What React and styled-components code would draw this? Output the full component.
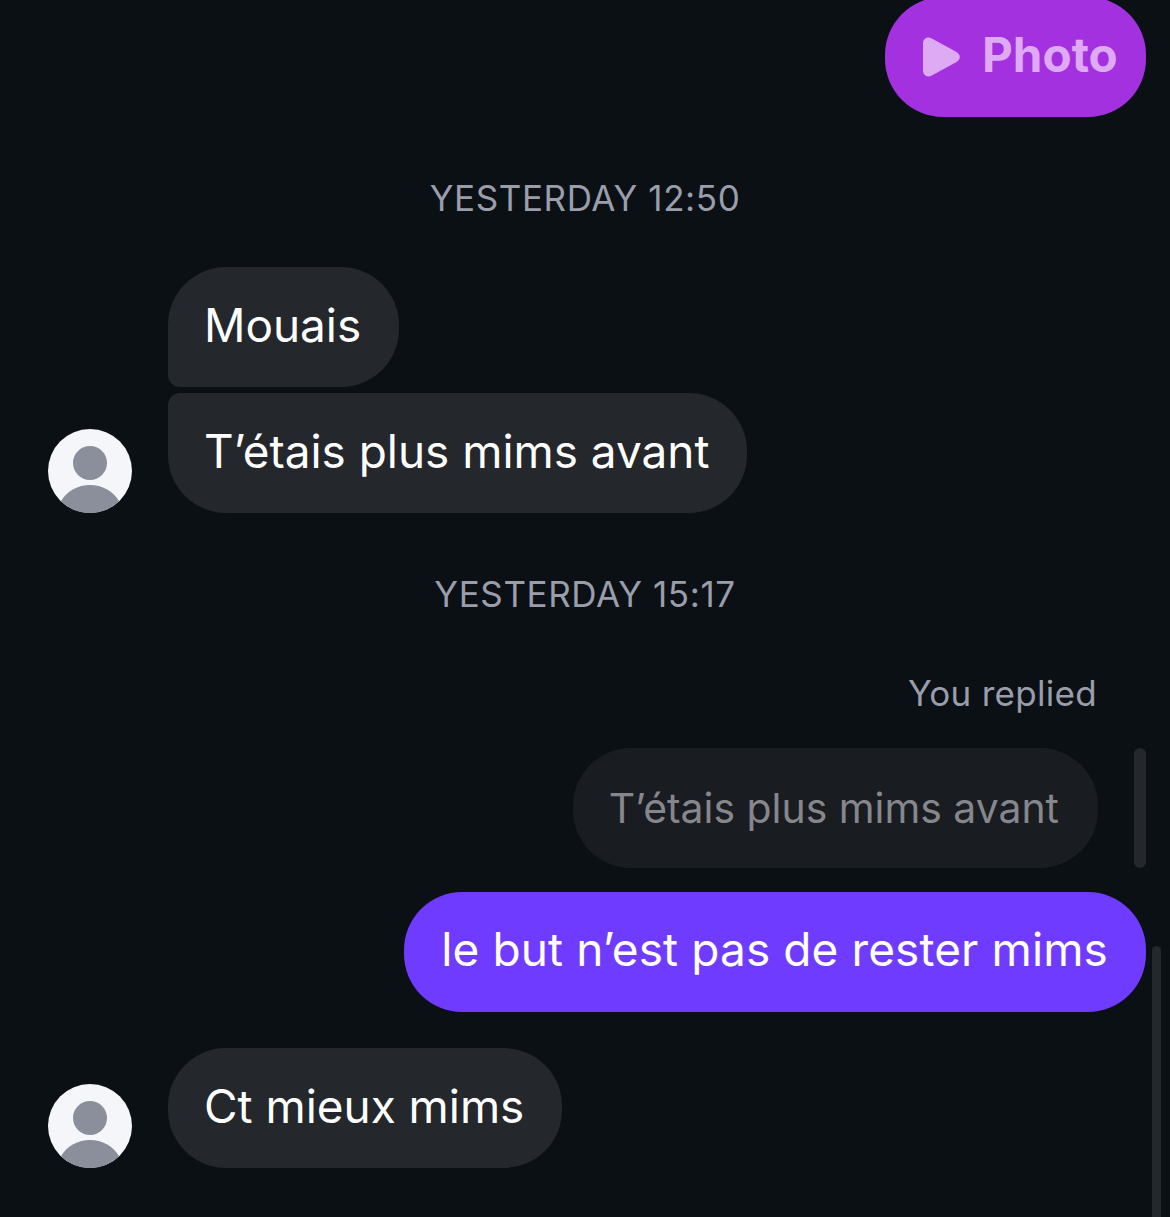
import styled, { createGlobalStyle } from "styled-components";

const GlobalStyle = createGlobalStyle`
  html, body {
    margin: 0;
    padding: 0;
    background: #0b1014;
  }
`;

export default function App() {
  return (
    <Page>
      <GlobalStyle />
      <PhotoRow>
        <PhotoBubble>
          <svg width="39" height="40" viewBox="0 0 40 42" preserveAspectRatio="none">
            <path
              d="M1 7C1 2 5 -1 10 1.500L35 15.500C40 18.500 40 23.500 35 26.500L10 40.500C5 43 1 40 1 35Z"
              fill="#deaaf3"
            />
          </svg>
          <PhotoLabel>Photo</PhotoLabel>
        </PhotoBubble>
      </PhotoRow>

      <Timestamp $top={61}>YESTERDAY 12:50</Timestamp>

      <Group $top={49}>
        <Row>
          <Bubble $first>Mouais</Bubble>
        </Row>
        <Row>
          <Avatar />
          <Bubble $last>T’étais plus mims avant</Bubble>
        </Row>
      </Group>

      <Timestamp $top={61}>YESTERDAY 15:17</Timestamp>

      <ReplyLabel>You replied</ReplyLabel>
      <ReplyRow>
        <ReplyBubble>T’étais plus mims avant</ReplyBubble>
        <ReplyBar />
      </ReplyRow>
      <SentRow>
        <SentBubble>le but n’est pas de rester mims</SentBubble>
      </SentRow>

      <Group $top={36}>
        <Row>
          <Avatar />
          <Bubble>Ct mieux mims</Bubble>
        </Row>
      </Group>

      <Scrollbar />
    </Page>
  );
}

function Avatar() {
  return (
    <AvatarWrap>
      <svg width="84" height="84" viewBox="0 0 84 84">
        <circle cx="42" cy="42" r="42" fill="#f4f6f9" />
        <circle cx="42" cy="34" r="17" fill="#8a8f9b" />
        <path
          d="M13 72C19 62 30 56 42 56C54 56 65 62 71 72C63 80 53 84 42 84C31 84 21 80 13 72Z"
          fill="#8a8f9b"
        />
      </svg>
    </AvatarWrap>
  );
}

const Page = styled.div`
  position: relative;
  width: 1170px;
  height: 1217px;
  overflow: hidden;
  background: #0b1014;
  color: #fff;
  font-family: Inter, "Liberation Sans", sans-serif;
`;

const PhotoRow = styled.div`
  display: flex;
  justify-content: flex-end;
  padding-right: 24px;
  margin-top: -3px;
`;

const PhotoBubble = styled.div`
  box-sizing: border-box;
  display: flex;
  align-items: center;
  gap: 21px;
  width: 261px;
  height: 120px;
  padding-left: 37px;
  border-radius: 58px;
  background: #a431df;
  color: #deaaf3;
  font-size: 47.6px;
  font-weight: 700;
`;

const PhotoLabel = styled.span`
  margin-bottom: 6px;
`;

const Timestamp = styled.div`
  margin-top: ${(p) => p.$top}px;
  height: 40px;
  line-height: 40px;
  text-align: center;
  font-size: 35px;
  letter-spacing: 0.6px;
  color: #9a9eab;
`;

const Group = styled.div`
  display: flex;
  flex-direction: column;
  gap: 6px;
  margin-top: ${(p) => p.$top}px;
  padding-left: 168px;
`;

const Row = styled.div`
  position: relative;
  display: flex;
  align-items: flex-end;
`;

const AvatarWrap = styled.div`
  position: absolute;
  left: -120px;
  bottom: 0;
  width: 84px;
  height: 84px;
`;

const Bubble = styled.div`
  box-sizing: border-box;
  height: 120px;
  padding: 0 38px 0 36px;
  line-height: 117px;
  font-size: 45.9px;
  white-space: nowrap;
  background: #24272c;
  border-radius: 58px;
  border-bottom-left-radius: ${(p) => (p.$first ? "12px" : "58px")};
  border-top-left-radius: ${(p) => (p.$last ? "12px" : "58px")};
`;

const ReplyLabel = styled.div`
  margin-top: 59px;
  padding-right: 73px;
  height: 40px;
  line-height: 40px;
  text-align: right;
  font-size: 35px;
  letter-spacing: 0.3px;
  color: #9a9eab;
`;

const ReplyRow = styled.div`
  display: flex;
  justify-content: flex-end;
  gap: 36px;
  margin-top: 35px;
  padding-right: 24px;
`;

const ReplyBubble = styled.div`
  box-sizing: border-box;
  height: 120px;
  padding: 0 39px 0 36px;
  line-height: 120px;
  font-size: 40.9px;
  white-space: nowrap;
  color: #85878c;
  background: #191c20;
  border-radius: 58px;
`;

const ReplyBar = styled.div`
  width: 12px;
  height: 120px;
  border-radius: 6px;
  background: #24272c;
`;

const SentRow = styled.div`
  display: flex;
  justify-content: flex-end;
  margin-top: 24px;
  padding-right: 24px;
`;

const SentBubble = styled.div`
  box-sizing: border-box;
  height: 120px;
  padding: 0 38px 0 37px;
  line-height: 114px;
  font-size: 46px;
  letter-spacing: 0.1px;
  white-space: nowrap;
  background: #6f3cff;
  border-radius: 58px;
`;

const Scrollbar = styled.div`
  position: absolute;
  left: 1152px;
  top: 946px;
  bottom: -10px;
  width: 9px;
  border-radius: 5px;
  background: #24272c;
`;
